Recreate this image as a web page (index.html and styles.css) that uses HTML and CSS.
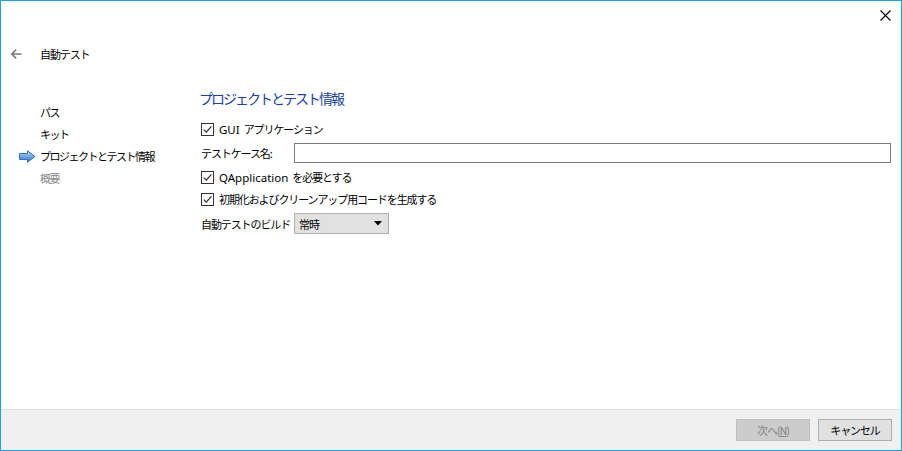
FILE: index.html
```html
<!DOCTYPE html>
<html lang="ja">
<head>
<meta charset="UTF-8">
<meta name="viewport" content="width=device-width, initial-scale=1.0">
<title>自動テスト</title>
<link rel="stylesheet" href="styles.css">
</head>
<body>

<div class="window">

    <div class="titlebar">
        <svg class="close" width="11" height="11" viewBox="0 0 11 11">
            <path d="M0.5 0.5 L10.5 10.5 M10.5 0.5 L0.5 10.5" stroke="#000" stroke-width="1.1" fill="none"/>
        </svg>
    </div>

    <div class="header">
        <svg class="back" width="12" height="12" viewBox="0 0 12 12">
            <path d="M11.5 6 H2 M6.2 1.6 L1.8 6 L6.2 10.4" stroke="#7b7b7b" stroke-width="1.6" fill="none"/>
        </svg>
        <span class="header-title">自動テスト</span>
    </div>

    <div class="main">

        <ul class="steps">
            <li><span class="marker"></span>パス</li>
            <li><span class="marker"></span>キット</li>
            <li class="current">
                <span class="marker">
                    <svg width="17" height="13" viewBox="0 0 17 13">
                        <defs>
                            <linearGradient id="arrowFill" x1="0" y1="0" x2="0" y2="1">
                                <stop offset="0" stop-color="#bcdaf8"/>
                                <stop offset="0.5" stop-color="#6ea6ea"/>
                                <stop offset="1" stop-color="#2c6ccc"/>
                            </linearGradient>
                        </defs>
                        <path d="M0.5 3.5 H8.5 V0.8 L16 6.5 L8.5 12.2 V9.5 H0.5 Z" fill="url(#arrowFill)" stroke="#3b6db6" stroke-width="1"/>
                    </svg>
                </span>プロジェクトとテスト情報
            </li>
            <li class="todo"><span class="marker"></span>概要</li>
        </ul>

        <div class="page">
            <div class="page-title">プロジェクトとテスト情報</div>

            <label class="row r1">
                <span class="box"><svg width="11" height="11" viewBox="0 0 11 11"><path d="M1.8 5.6 L4.3 8.2 L9.4 2.4" stroke="#2b2b2b" stroke-width="1.2" fill="none"/></svg></span>
                <span><span class="lat">GUI</span>アプリケーション</span>
            </label>

            <div class="row r2">
                <span class="field-label">テストケース名:</span>
                <input class="text-input" type="text" value="">
            </div>

            <label class="row r3">
                <span class="box"><svg width="11" height="11" viewBox="0 0 11 11"><path d="M1.8 5.6 L4.3 8.2 L9.4 2.4" stroke="#2b2b2b" stroke-width="1.2" fill="none"/></svg></span>
                <span><span class="lat">QApplication</span>を必要とする</span>
            </label>

            <label class="row r4">
                <span class="box"><svg width="11" height="11" viewBox="0 0 11 11"><path d="M1.8 5.6 L4.3 8.2 L9.4 2.4" stroke="#2b2b2b" stroke-width="1.2" fill="none"/></svg></span>
                <span>初期化およびクリーンアップ用コードを生成する</span>
            </label>

            <div class="row r5">
                <span class="field-label">自動テストのビルド</span>
                <div class="combo">
                    <span>常時</span>
                    <svg width="8" height="5" viewBox="0 0 8 5"><path d="M0 0 H8 L4 4.5 Z" fill="#000"/></svg>
                </div>
            </div>
        </div>

    </div>

    <div class="footer">
        <button class="btn disabled">次へ(<u>N</u>)</button>
        <button class="btn">キャンセル</button>
    </div>

</div>

</body>
</html>
```

FILE: styles.css
```css
*{
    box-sizing:border-box;
}

body{
    margin:0;
    background:#fff;
    font-family:"Noto Sans CJK JP", sans-serif;
    font-size:11px;
    letter-spacing:-1.1px;
    color:#000;
}

.window{
    width:902px;
    height:451px;
    border:1px solid #1a9ff0;
    display:flex;
    flex-direction:column;
    background:#fff;
}

.titlebar{
    height:28px;
    display:flex;
    align-items:center;
    justify-content:flex-end;
    padding-right:10px;
}

.header{
    display:flex;
    align-items:center;
    height:55px;
    padding:15px 0 20px 9px;
}

.back{
    margin-right:18px;
}

.header-title{
    line-height:20px;
}

.main{
    display:flex;
    flex:1;
}

.steps{
    list-style:none;
    margin:0;
    padding:17px 0 0 0;
    width:198px;
    flex:none;
    letter-spacing:-1.5px;
}

.steps li{
    height:22px;
    display:flex;
    align-items:center;
}

.marker{
    width:39px;
    flex:none;
    display:flex;
    align-items:center;
    padding-left:18px;
}

.steps li.todo{
    color:#8a8a8a;
}

.page{
    flex:1;
    padding:4px 10px 0 0;
}

.page-title{
    font-size:14px;
    letter-spacing:-2px;
    line-height:20px;
    color:#1a3fa6;
}

.row{
    display:flex;
    align-items:center;
    height:22px;
    padding-left:2px;
}

.r1{ margin-top:10px; }
.r2{ margin-top:2px; }
.r3{ margin-top:2px; }
.r4{ margin-top:0; }
.r5{ margin-top:2px; height:23px; }

.lat{
    font-family:"Noto Sans", sans-serif;
    font-size:11.5px;
    letter-spacing:0;
    margin-right:4px;
}

.box{
    width:13px;
    height:13px;
    border:1px solid #333;
    background:#fff;
    margin-right:5px;
    flex:none;
    display:flex;
    align-items:center;
    justify-content:center;
}

.field-label{
    width:93px;
    flex:none;
}

.text-input{
    flex:1;
    height:20px;
    border:1px solid #7a7a7a;
    margin:0;
    padding:0 3px;
    outline:none;
}

.combo{
    width:95px;
    height:21px;
    background:#e1e1e1;
    border:1px solid #adadad;
    display:flex;
    align-items:center;
    justify-content:space-between;
    padding:0 6px 0 4px;
}

.footer{
    height:41px;
    border-top:1px solid #dfdfdf;
    background:#f0f0f0;
    display:flex;
    align-items:center;
    justify-content:flex-end;
    gap:8px;
    padding-right:9px;
}

.btn{
    width:74px;
    height:22px;
    background:#e1e1e1;
    border:1px solid #adadad;
    font-family:"Noto Sans CJK JP", sans-serif;
    font-size:11px;
    letter-spacing:-1.1px;
    color:#000;
    padding:0;
}

.btn.disabled{
    background:#cccccc;
    border-color:#bfbfbf;
    color:#838383;
}
```
